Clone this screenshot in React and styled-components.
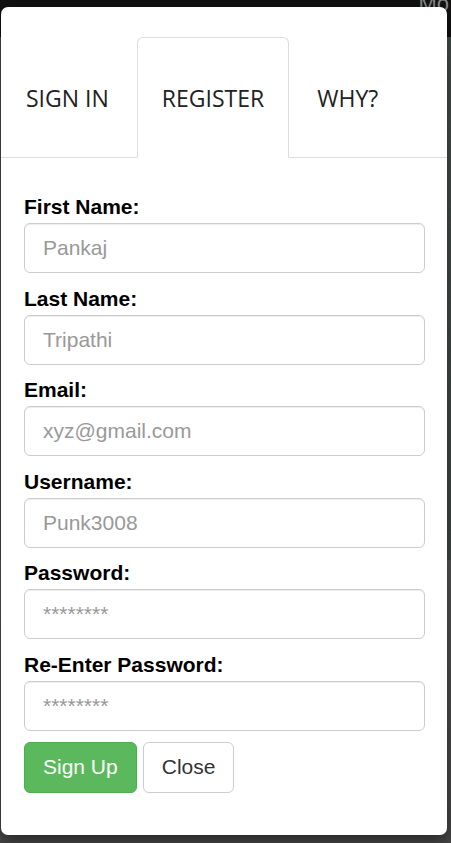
import React from "react";
import styled, { createGlobalStyle } from "styled-components";

const GlobalStyle = createGlobalStyle`
  html, body {
    margin: 0;
    padding: 0;
  }

  body {
    width: 451px;
    height: 843px;
    overflow: hidden;
    background: #4b4b4b;
  }

  * {
    box-sizing: border-box;
  }
`;

const Backdrop = styled.div`
  position: relative;
  width: 451px;
  height: 843px;
  padding: 7px 4px 0 1px;
  background: linear-gradient(
    to bottom,
    #121212 0,
    #121212 37px,
    #46504d 37px,
    #3f4845 560px,
    #555555 560px,
    #474747 100%
  );
`;

const BackdropText = styled.span`
  position: absolute;
  top: -9px;
  right: 2px;
  font-family: "Liberation Sans", Arial, sans-serif;
  font-size: 22px;
  color: #8a8a8a;
`;

const Modal = styled.div`
  position: relative;
  background: #fff;
  border-radius: 7px;
  box-shadow: 0 5px 15px rgba(0, 0, 0, 0.5);
  padding-top: 30px;
  padding-bottom: 42px;
`;

const TabList = styled.ul`
  display: flex;
  list-style: none;
  margin: 0;
  padding: 0;
  border-bottom: 1px solid #dddddd;
`;

const Tab = styled.li`
  height: 121px;
  margin-right: 3px;
  margin-bottom: -1px;
  padding: 1px 24px 0;
  display: flex;
  align-items: center;
  border: 1px solid ${(p) => (p.$active ? "#dddddd" : "transparent")};
  border-bottom-color: ${(p) => (p.$active ? "#fff" : "transparent")};
  border-radius: 6px 6px 0 0;
  background: ${(p) => (p.$active ? "#fff" : "transparent")};
  font-family: "Open Sans", "Segoe UI", sans-serif;
  font-size: 23px;
  color: #222;
  text-transform: uppercase;
`;

const Form = styled.form`
  padding: 36px 22px 0 23px;
`;

const Group = styled.div`
  margin-bottom: 12.6px;
`;

const Label = styled.label`
  display: block;
  margin-bottom: 4px;
  font-family: "Liberation Sans", Arial, sans-serif;
  font-weight: bold;
  font-size: 21px;
  line-height: 25px;
  color: #000;
`;

const Input = styled.input`
  display: block;
  width: 100%;
  height: 50px;
  padding: 0 18px;
  border: 1.5px solid #cccccc;
  border-radius: 6px;
  background: #fff;
  font-family: "Liberation Sans", Arial, sans-serif;
  font-size: 21px;
  color: #555;
  box-shadow: inset 0 1px 1px rgba(0, 0, 0, 0.075);
  outline: none;

  &::placeholder {
    color: #999;
  }
`;

const Actions = styled.div`
  display: flex;
  gap: 6px;
  margin-top: -1.6px;
`;

const Button = styled.button`
  height: 51px;
  padding: 0 18px;
  border-radius: 6px;
  border: 1.5px solid ${(p) => (p.$primary ? "#4cae4c" : "#cccccc")};
  background: ${(p) => (p.$primary ? "#5cb85c" : "#fff")};
  color: ${(p) => (p.$primary ? "#fff" : "#333")};
  font-family: "Liberation Sans", Arial, sans-serif;
  font-size: 21px;
  cursor: pointer;
`;

const fields = [
  { label: "First Name:", placeholder: "Pankaj" },
  { label: "Last Name:", placeholder: "Tripathi" },
  { label: "Email:", placeholder: "xyz@gmail.com" },
  { label: "Username:", placeholder: "Punk3008" },
  { label: "Password:", placeholder: "********" },
  { label: "Re-Enter Password:", placeholder: "********" },
];

export default function App() {
  return (
    <>
      <GlobalStyle />
      <Backdrop>
        <BackdropText>Mo</BackdropText>
        <Modal>
          <TabList>
            <Tab>Sign In</Tab>
            <Tab $active>Register</Tab>
            <Tab>Why?</Tab>
          </TabList>
          <Form onSubmit={(e) => e.preventDefault()}>
            {fields.map((f) => (
              <Group key={f.label}>
                <Label>{f.label}</Label>
                <Input type="text" placeholder={f.placeholder} />
              </Group>
            ))}
            <Actions>
              <Button $primary type="submit">
                Sign Up
              </Button>
              <Button type="button">Close</Button>
            </Actions>
          </Form>
        </Modal>
      </Backdrop>
    </>
  );
}
